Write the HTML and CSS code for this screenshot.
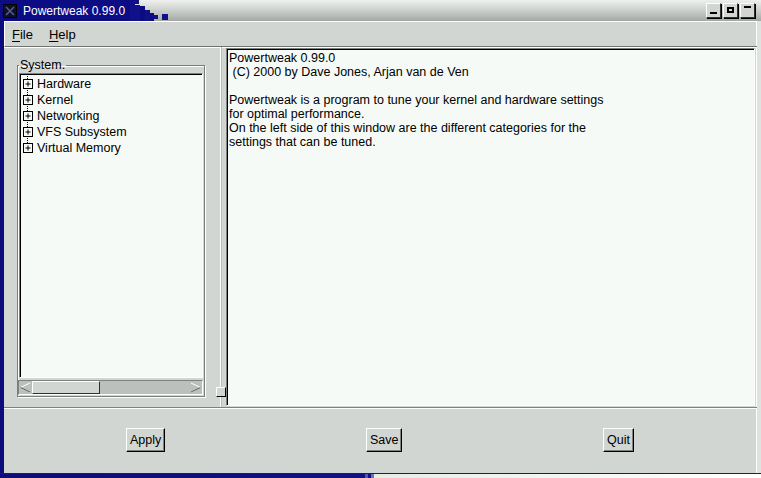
FILE: index.html
```html
<!DOCTYPE html>
<html>
<head>
<meta charset="utf-8">
<title>Powertweak 0.99.0</title>
<link rel="stylesheet" href="styles.css">
</head>
<body>
<div class="win">
  <div class="titlebar">
    <div class="tleft">
      <div class="ticon">
        <svg width="14" height="14" viewBox="0 0 14 14"><rect x="0.5" y="0.5" width="13" height="13" fill="#101020" stroke="#000"/><path d="M3 3 L11 11 M11 3 L3 11" stroke="#5060a0" stroke-width="1.5"/></svg>
      </div>
      <span class="ttext">Powertweak 0.99.0</span>
    </div>
    <svg class="tblocks" width="40" height="21" viewBox="0 0 40 21">
      <rect x="0" y="0" width="5" height="21" fill="#10108a"/>
      <rect x="5" y="0" width="4" height="4" fill="#10108a"/>
      <rect x="5" y="5" width="5" height="16" fill="#10108a"/>
      <rect x="10" y="6" width="5" height="15" fill="#0c0c80"/>
      <rect x="15" y="10" width="5" height="11" fill="#10108a"/>
      <rect x="20" y="13" width="4" height="8" fill="#0c0c80"/>
      <rect x="24" y="15" width="4" height="4" fill="#10108a"/>
      <rect x="32" y="14" width="6" height="6" fill="#10108a"/>
    </svg>
    <div class="tbtns">
      <div class="tbtn"><span class="g-min"></span></div>
      <div class="tbtn"><span class="g-max"></span></div>
      <div class="tbtn"><span class="g-close"></span></div>
    </div>
  </div>
  <div class="frame">
    <div class="menubar">
      <span class="mi"><u>F</u>ile</span>
      <span class="mi"><u>H</u>elp</span>
    </div>
    <div class="main">
      <div class="leftpane">
        <fieldset class="group">
          <legend>System.</legend>
          <div class="list">
            <div class="tree">
              <div class="row"><svg class="exp" width="11" height="16" viewBox="0 0 11 16"><path d="M4.5 0 V16" stroke="#000" stroke-dasharray="1 1"/><rect x="0.5" y="3.5" width="9" height="9" fill="#f6faf6" stroke="#000"/><path d="M2.5 8 H7.5 M5 5.5 V10.5" stroke="#000"/></svg><span>Hardware</span></div>
              <div class="row"><svg class="exp" width="11" height="16" viewBox="0 0 11 16"><path d="M4.5 0 V16" stroke="#000" stroke-dasharray="1 1"/><rect x="0.5" y="3.5" width="9" height="9" fill="#f6faf6" stroke="#000"/><path d="M2.5 8 H7.5 M5 5.5 V10.5" stroke="#000"/></svg><span>Kernel</span></div>
              <div class="row"><svg class="exp" width="11" height="16" viewBox="0 0 11 16"><path d="M4.5 0 V16" stroke="#000" stroke-dasharray="1 1"/><rect x="0.5" y="3.5" width="9" height="9" fill="#f6faf6" stroke="#000"/><path d="M2.5 8 H7.5 M5 5.5 V10.5" stroke="#000"/></svg><span>Networking</span></div>
              <div class="row"><svg class="exp" width="11" height="16" viewBox="0 0 11 16"><path d="M4.5 0 V16" stroke="#000" stroke-dasharray="1 1"/><rect x="0.5" y="3.5" width="9" height="9" fill="#f6faf6" stroke="#000"/><path d="M2.5 8 H7.5 M5 5.5 V10.5" stroke="#000"/></svg><span>VFS Subsystem</span></div>
              <div class="row"><svg class="exp" width="11" height="16" viewBox="0 0 11 16"><path d="M4.5 0 V8" stroke="#000" stroke-dasharray="1 1"/><rect x="0.5" y="3.5" width="9" height="9" fill="#f6faf6" stroke="#000"/><path d="M2.5 8 H7.5 M5 5.5 V10.5" stroke="#000"/></svg><span>Virtual Memory</span></div>
            </div>
            <div class="hscroll">
              <div class="arrow"><svg width="13" height="13" viewBox="0 0 13 13"><path d="M11 2 L1.5 6.5 L11 11" fill="none" stroke="#fff"/><path d="M11 11 L1.5 6.5" stroke="#555" fill="none"/></svg></div>
              <div class="thumb"></div>
              <div class="trough"></div>
              <div class="arrow"><svg width="13" height="13" viewBox="0 0 13 13"><path d="M2 2 L11.5 6.5 L2 11" fill="none" stroke="#fff"/><path d="M2 11 L11.5 6.5" stroke="#555" fill="none"/></svg></div>
            </div>
          </div>
        </fieldset>
      </div>
      <div class="gutter"><div class="handle"></div></div>
      <div class="textview">
        <p>Powertweak 0.99.0<br>&nbsp;(C) 2000 by Dave Jones, Arjan van de Ven</p>
        <p>Powertweak is a program to tune your kernel and hardware settings<br>for optimal performance.<br>On the left side of this window are the different categories for the<br>settings that can be tuned.</p>
      </div>
    </div>
    <div class="buttons">
      <button class="btn">Apply</button>
      <button class="btn">Save</button>
      <button class="btn">Quit</button>
    </div>
  </div>
  <div class="bottombar"></div>
</div>
</body>
</html>
```
FILE: styles.css
```css
* { box-sizing: border-box; }
html, body { margin: 0; padding: 0; }
body {
  width: 761px;
  height: 478px;
  overflow: hidden;
  background-color: #d2d6d2;
  font-family: "Liberation Sans", Arial, sans-serif;
  font-size: 12px;
  color: #000;
}
.win {
  display: flex;
  flex-direction: column;
  height: 478px;
}
.titlebar {
  height: 21px;
  flex: none;
  display: flex;
  align-items: center;
  background-color: #c8ccc8;
  background-image: linear-gradient(to bottom, #eef0ee 0%, #c8ccc8 55%, #a4a8a4 100%);
}
.tleft {
  width: 130px;
  height: 21px;
  flex: none;
  display: flex;
  align-items: center;
  background-color: #0c0c84;
}
.ticon {
  width: 14px;
  height: 14px;
  margin-left: 3px;
  display: flex;
}
.ttext {
  margin-left: 6px;
  color: #ffffff;
  font-size: 12px;
  white-space: nowrap;
}
.tblocks { flex: none; }
.tbtns {
  margin-left: auto;
  margin-right: 6px;
  display: flex;
  gap: 2px;
}
.tbtn {
  width: 15px;
  height: 15px;
  background-color: #d2d6d2;
  border: 1px solid;
  border-color: #fff #303030 #303030 #fff;
  box-shadow: 1px 1px 0 #000;
  display: flex;
  justify-content: center;
}
.g-min { width: 7px; height: 2px; background-color: #000; margin-top: 8px; }
.g-max { width: 7px; height: 6px; border: 2px solid #000; margin-top: 3px; }
.g-close { width: 7px; height: 2px; background-color: #000; margin-top: 2px; }

.frame {
  flex: 1;
  display: flex;
  flex-direction: column;
  border-left: 4px solid #0c0c7c;
  border-right: 4px solid #dfe3df;
  box-shadow: inset -1px 0 0 #fff;
}
.menubar {
  height: 26px;
  flex: none;
  display: flex;
  align-items: center;
  gap: 16px;
  padding-left: 7px;
  font-size: 13px;
  border-top: 1px solid #fff;
  border-left: 1px solid #fff;
  border-bottom: 1px solid #707470;
  box-shadow: 0 1px 0 #fff;
}
.mi { padding-top: 1px; }
.mi u { text-decoration-thickness: 1px; text-underline-offset: 2px; }

.main {
  height: 361px;
  flex: none;
  display: flex;
  border-bottom: 1px solid #7e827e;
  box-shadow: 0 1px 0 #fff;
}
.leftpane {
  width: 210px;
  flex: none;
  padding: 11px 9px 10px 13px;
  display: flex;
}
.group {
  margin: 0;
  padding: 1px 1px 1px 0;
  border: 1px solid #7a7e7a;
  box-shadow: inset 1px 1px 0 #fff, 1px 1px 0 #fff;
  flex: 1;
  display: flex;
  min-width: 0;
}
.group legend {
  padding: 0 1px;
  margin-left: 1px;
  font-size: 12.5px;
  line-height: 14px;
}
.list {
  flex: 1;
  display: flex;
  flex-direction: column;
  gap: 2px;
  padding-left: 1px;
}
.tree {
  flex: 1;
  padding: 2px 0 0 3px;
  font-size: 12.5px;
  background-color: #f6faf6;
  border: 1px solid;
  border-color: #7e827e #fff #fff #7e827e;
  box-shadow: inset 1px 1px 0 #000;
}
.row {
  height: 16px;
  display: flex;
  align-items: center;
  white-space: nowrap;
}
.exp { flex: none; margin-right: 3px; }
.hscroll {
  height: 15px;
  flex: none;
  display: flex;
  margin-left: -1px;
  background-color: #bcc0bc;
  border: 1px solid;
  border-color: #7e827e #fff #fff #7e827e;
}
.arrow {
  width: 13px;
  height: 13px;
  flex: none;
  display: flex;
  align-items: center;
}
.thumb {
  width: 68px;
  height: 13px;
  flex: none;
  background-color: #d2d6d2;
  border: 1px solid;
  border-color: #fff #303030 #303030 #fff;
}
.trough { flex: 1; }

.gutter {
  width: 10px;
  flex: none;
  position: relative;
}
.gutter::before {
  content: "";
  position: absolute;
  left: 6px;
  top: 0;
  bottom: 0;
  width: 1px;
  background-color: #fff;
}
.gutter::after {
  content: "";
  position: absolute;
  left: 7px;
  top: 0;
  bottom: 0;
  width: 1px;
  background-color: #b8bcb8;
}
.handle {
  position: absolute;
  left: 2px;
  top: 340px;
  width: 10px;
  height: 10px;
  background-color: #d2d6d2;
  border: 1px solid;
  border-color: #fff #000 #000 #fff;
  z-index: 1;
}
.textview {
  flex: 1;
  margin: 1px 2px 1px 2px;
  background-color: #f6faf6;
  border: 1px solid;
  border-color: #7e827e #fff #fff #7e827e;
  box-shadow: inset 1px 1px 0 #000;
  padding: 2px 2px;
  line-height: 14px;
  font-size: 12.5px;
}
.textview p { margin: 0 0 14px 0; }

.buttons {
  flex: 1;
  display: flex;
  align-items: center;
  justify-content: space-between;
  padding: 0 123px 1px 122px;
}
.btn {
  font-family: "Liberation Sans", Arial, sans-serif;
  font-size: 12.5px;
  height: 24px;
  padding: 0 3px;
  background-color: #d2d6d2;
  color: #000;
  border: 1px solid;
  border-color: #fff #000 #000 #fff;
  box-shadow: inset -1px -1px 0 #7e827e;
  border-radius: 0;
  margin: 0;
}
.bottombar {
  height: 5px;
  flex: none;
  border-top: 1px solid #202040;
  background-color: #10108a;
  background-image: linear-gradient(to right, #0c0c7c 0, #10108a 365px, #5058a8 365px, #5058a8 368px, #10108a 368px, #10108a 371px, #6870b0 371px, #6870b0 374px, #e8ece8 374px, #ffffff 100%);
}
```
